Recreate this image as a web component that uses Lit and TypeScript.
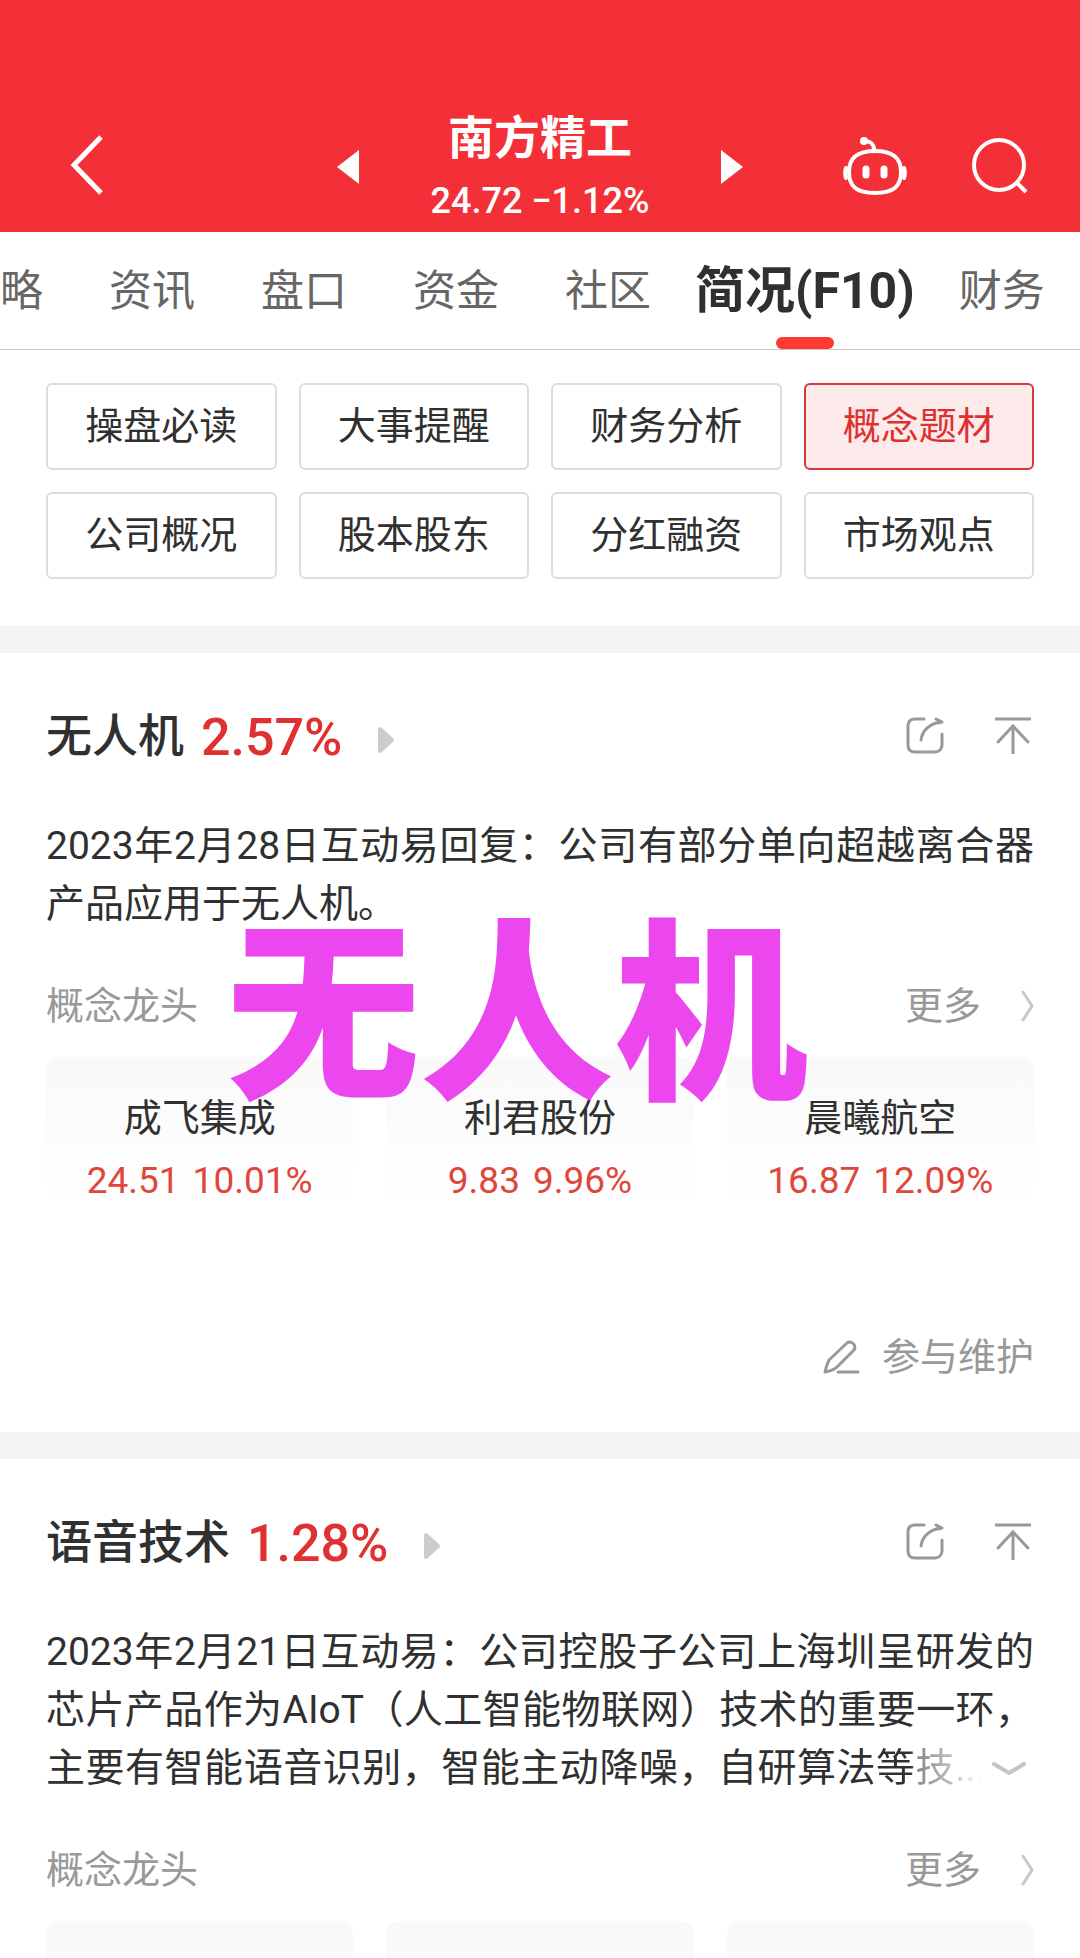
import { LitElement, html, css, nothing } from "lit";
import { customElement, property, state } from "lit/decorators.js";

interface Stock {
  name: string;
  price: string;
  change: string;
}

const resetStyles = css`
  * {
    box-sizing: border-box;
  }
  button {
    margin: 0;
    padding: 0;
    border: 0;
    background: none;
    color: inherit;
    font: inherit;
    cursor: pointer;
  }
  a {
    color: inherit;
    text-decoration: none;
  }
  svg {
    display: block;
    fill: none;
    stroke: currentColor;
    overflow: visible;
  }
`;

@customElement("stock-header")
export class StockHeader extends LitElement {
  static styles = [
    resetStyles,
    css`
      :host {
        display: block;
        background: #f33037;
        color: #fff;
      }
      .bar {
        display: grid;
        grid-template-columns: 1fr auto 1fr;
        align-items: center;
        padding: 102px 53px 0;
      }
      .back {
        justify-self: start;
        padding: 0 17px 4px;
      }
      .switcher {
        display: flex;
        align-items: center;
        gap: 72px;
      }
      .quote {
        padding-top: 4px;
        text-align: center;
      }
      .name {
        margin: 0;
        font-size: 46px;
        line-height: 64px;
        font-weight: 700;
      }
      .price {
        margin: 0;
        font-size: 36px;
        line-height: 62px;
        font-weight: 500;
      }
      .tools {
        justify-self: end;
        display: flex;
        align-items: center;
        gap: 66px;
        padding-bottom: 2px;
      }
      .solid {
        fill: currentColor;
        stroke: none;
      }
    `,
  ];

  render() {
    return html`
      <header class="bar">
        <button class="back" aria-label="返回">
          <svg width="34" height="60" viewBox="0 0 34 60" stroke-width="5">
            <path d="M31 2 4 30l27 28" />
          </svg>
        </button>
        <div class="switcher">
          <button aria-label="上一只">
            <svg class="solid" width="22" height="34" viewBox="0 0 22 34"><path d="M22 0v34L0 17z" /></svg>
          </button>
          <div class="quote">
            <h1 class="name">南方精工</h1>
            <p class="price">24.72 −1.12%</p>
          </div>
          <button aria-label="下一只">
            <svg class="solid" width="22" height="34" viewBox="0 0 22 34"><path d="M0 0v34l22-17z" /></svg>
          </button>
        </div>
        <div class="tools">
          <button aria-label="智能助手">
            <svg width="64" height="60" viewBox="0 0 64 60" stroke-width="4" stroke-linecap="round">
              <path d="M32 15c18 0 26 7 26 21s-7 21-26 21S6 50 6 36s8-21 26-21z" />
              <path d="M31 14c0-6-4-9-9-9" />
              <circle class="solid" cx="21" cy="5" r="4" />
              <path d="M3 32c-1 3-1 7 0 10M61 32c1 3 1 7 0 10" stroke-width="4" />
              <path d="M23 33v6M41 33v6" stroke-width="7" />
            </svg>
          </button>
          <button aria-label="搜索">
            <svg width="54" height="56" viewBox="0 0 54 56" stroke-width="4">
              <circle cx="26" cy="27" r="25" />
              <path d="m43 44 10 10" />
            </svg>
          </button>
        </div>
      </header>
    `;
  }
}

@customElement("section-tabs")
export class SectionTabs extends LitElement {
  static styles = [
    resetStyles,
    css`
      :host {
        display: block;
        overflow: hidden;
        border-bottom: 1px solid #c8c8c8;
      }
      .tabs {
        display: flex;
        height: 117px;
      }
      .tab {
        position: relative;
        flex: none;
        padding: 0 33px;
        font-size: 43px;
        line-height: 116px;
        color: #666;
      }
      .tab:first-child {
        padding-left: 0;
      }
      .tab.active {
        padding: 0 11px;
        font-size: 50px;
        font-weight: 700;
        color: #303030;
      }
      .tab.active::after {
        content: "";
        position: absolute;
        left: 50%;
        bottom: 0;
        width: 58px;
        height: 12px;
        margin-left: -29px;
        border-radius: 6px;
        background: #fd3a31;
      }
    `,
  ];

  @state() private active = "简况(F10)";

  private tabs = ["略", "资讯", "盘口", "资金", "社区", "简况(F10)", "财务"];

  render() {
    return html`
      <nav class="tabs">
        ${this.tabs.map(
          (tab) => html`<button
            class="tab ${tab === this.active ? "active" : ""}"
            @click=${() => (this.active = tab)}
          >${tab}</button>`
        )}
      </nav>
    `;
  }
}

@customElement("topic-grid")
export class TopicGrid extends LitElement {
  static styles = [
    resetStyles,
    css`
      :host {
        display: block;
        padding: 33px 46px 47px;
      }
      .grid {
        display: grid;
        grid-template-columns: repeat(4, 1fr);
        gap: 22px;
      }
      .topic {
        height: 87px;
        padding-bottom: 8px;
        border: 2px solid #dcdcdc;
        border-radius: 6px;
        font-size: 38px;
        color: #303030;
      }
      .topic.active {
        border-color: #d23a3c;
        background: #fdeaea;
        color: #df3030;
      }
    `,
  ];

  @state() private active = "概念题材";

  private topics = [
    "操盘必读", "大事提醒", "财务分析", "概念题材",
    "公司概况", "股本股东", "分红融资", "市场观点",
  ];

  render() {
    return html`
      <div class="grid">
        ${this.topics.map(
          (topic) => html`<button
            class="topic ${topic === this.active ? "active" : ""}"
            @click=${() => (this.active = topic)}
          >${topic}</button>`
        )}
      </div>
    `;
  }
}

@customElement("concept-section")
export class ConceptSection extends LitElement {
  static styles = [
    resetStyles,
    css`
      :host {
        display: flex;
        flex-direction: column;
        padding: 44px 46px 0;
        border-top: 27px solid #f4f4f4;
        color: #303030;
        font-size: 38px;
      }
      .head {
        display: flex;
        align-items: center;
        height: 76px;
      }
      .title {
        display: flex;
        align-items: center;
        gap: 17px;
      }
      .name {
        margin: 0;
        padding-bottom: 6px;
        font-size: 46px;
        font-weight: 500;
      }
      .change {
        padding-top: 4px;
        font-size: 52px;
        font-weight: 500;
        color: #e03131;
      }
      .arrow {
        margin: 10px 0 0 19px;
        fill: #ccc;
        stroke: #ccc;
        stroke-width: 4;
        stroke-linejoin: round;
      }
      .actions {
        display: flex;
        gap: 52px;
        margin-left: auto;
        padding-right: 3px;
        color: #999;
      }
      .text {
        margin: 44px 0 0;
        font-size: 39px;
        line-height: 58px;
        text-align: justify;
      }
      .row {
        display: flex;
        align-items: center;
        justify-content: space-between;
        margin-top: 44px;
        line-height: 58px;
        color: #999;
      }
      .more {
        display: flex;
        align-items: center;
        gap: 40px;
      }
      .more svg {
        color: #c8c8c8;
      }
      .leaders {
        flex: 1;
        display: grid;
        grid-template-columns: repeat(3, 1fr);
        gap: 33px;
        margin-top: 22px;
      }
      .stock {
        display: block;
        padding: 31px 0 2px;
        border-radius: 12px 12px 0 0;
        background: linear-gradient(#f9f9f9, #fff 150px);
        text-align: center;
        line-height: 60px;
      }
      .quote {
        display: flex;
        justify-content: center;
        gap: 13px;
        font-size: 37px;
        line-height: 66px;
        color: #e0473c;
      }
      .edit {
        display: flex;
        align-items: center;
        align-self: flex-end;
        gap: 22px;
        margin: 112px 0 46px;
        color: #999;
        line-height: 58px;
      }
    `,
  ];

  @property() name = "";
  @property() change = "";
  @property({ attribute: false }) stocks: (Stock | null)[] = [];
  @property({ type: Boolean }) editable = false;

  render() {
    return html`
      <div class="head">
        <a class="title" href="#">
          <h2 class="name">${this.name}</h2>
          <span class="change">${this.change}</span>
          <svg class="arrow" width="16" height="26" viewBox="0 0 16 26"><path d="M2 2v22L14 13z" /></svg>
        </a>
        <div class="actions">
          <button aria-label="分享">
            <svg width="37" height="37" viewBox="0 0 37 37" stroke-width="3" stroke-linecap="round">
              <path d="M18 2H9c-5 0-7 3-7 7v19c0 5 3 7 7 7h20c4 0 7-3 7-7V17" />
              <path d="M15 23C16 14 23 7 34 5" />
              <path d="m30 2 6 3-4 1" stroke-linejoin="round" />
            </svg>
          </button>
          <button aria-label="回到顶部">
            <svg width="36" height="37" viewBox="0 0 36 37" stroke-width="3">
              <path d="M0 2h36M18 10v27" />
              <path d="m3 25 15-16 15 16" stroke-linecap="round" />
            </svg>
          </button>
        </div>
      </div>
      <p class="text"><slot></slot></p>
      <div class="row">
        <span>概念龙头</span>
        <a class="more" href="#">
          更多
          <svg width="13" height="32" viewBox="0 0 13 32" stroke-width="3" stroke-linecap="round">
            <path d="m2 2 9 14-9 14" />
          </svg>
        </a>
      </div>
      <div class="leaders">
        ${this.stocks.map((stock) =>
          stock
            ? html`<a class="stock" href="#">
                ${stock.name}
                <span class="quote"><span>${stock.price}</span><span>${stock.change}</span></span>
              </a>`
            : html`<div class="stock"></div>`
        )}
      </div>
      ${this.editable
        ? html`<button class="edit">
            <svg width="37" height="34" viewBox="0 0 37 34" stroke-width="3" stroke-linecap="round" stroke-linejoin="round">
              <path d="M2 32c1-5 2-8 4-12L24 3c4-3 10 2 7 7L14 27c-3 3-7 4-12 5z" />
              <path d="M15 32h20" />
            </svg>
            参与维护
          </button>`
        : nothing}
    `;
  }
}

@customElement("app-root")
export class AppRoot extends LitElement {
  static styles = [
    resetStyles,
    css`
      :host {
        display: flex;
        flex-direction: column;
        min-height: 100vh;
        background: #fff;
        font-family: Roboto, "Noto Sans CJK SC", sans-serif;
      }
      .featured {
        position: relative;
      }
      .caption {
        position: absolute;
        top: 292px;
        left: 226px;
        font-size: 194px;
        line-height: 200px;
        font-weight: 900;
        color: #ec46ee;
        white-space: nowrap;
        pointer-events: none;
      }
      .rest {
        flex: 1;
      }
      .line {
        display: block;
        text-align-last: justify;
      }
      .fade {
        background: linear-gradient(90deg, #303030 31%, #888 37%, #bbb 66%, #fff 98%);
        background-clip: text;
        -webkit-background-clip: text;
        color: transparent;
      }
      .expand {
        width: 48px;
        height: 24px;
        padding-left: 6px;
        text-align-last: left;
        color: #c4c4c4;
      }
    `,
  ];

  private leaders: Stock[] = [
    { name: "成飞集成", price: "24.51", change: "10.01%" },
    { name: "利君股份", price: "9.83", change: "9.96%" },
    { name: "晨曦航空", price: "16.87", change: "12.09%" },
  ];

  render() {
    return html`
      <stock-header></stock-header>
      <section-tabs></section-tabs>
      <topic-grid></topic-grid>
      <div class="featured">
        <concept-section name="无人机" change="2.57%" .stocks=${this.leaders} editable>
          2023年2月28日互动易回复：公司有部分单向超越离合器产品应用于无人机。
        </concept-section>
        <div class="caption">无人机</div>
      </div>
      <concept-section class="rest" name="语音技术" change="1.28%" .stocks=${[null, null, null]}>
        <span class="line">2023年2月21日互动易：公司控股子公司上海圳呈研发的</span>
        <span class="line">芯片产品作为AIoT（人工智能物联网）技术的重要一环，</span>
        <span class="line">主要有智能语音识别，智能主动降噪，自研算法<span class="fade">等技...</span><button class="expand" aria-label="展开">
            <svg width="34" height="14" viewBox="0 0 34 14" stroke-width="4" stroke-linecap="round">
              <path d="m2 2 15 9 15-9" />
            </svg></button></span>
      </concept-section>
    `;
  }
}
